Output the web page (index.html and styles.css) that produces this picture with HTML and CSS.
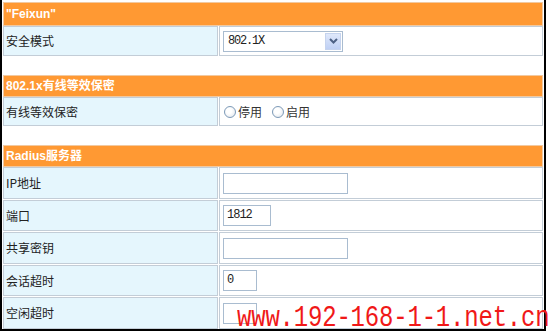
FILE: index.html
```html
<!DOCTYPE html>
<html>
<head>
<meta charset="utf-8">
<link rel="stylesheet" href="styles.css">
</head>
<body>
<div class="frame">
  <div class="section">
    <div class="head first">"Feixun"</div>
    <div class="row r30">
      <div class="label">安全模式</div>
      <div class="value">
        <div class="select">
          <span class="sel-text">802.1X</span>
          <span class="sel-btn"><svg width="9" height="6" viewBox="0 0 9 6"><path d="M1 1 L4.5 4.5 L8 1" fill="none" stroke="#4d6185" stroke-width="2"/></svg></span>
        </div>
      </div>
    </div>
  </div>
  <div class="section">
    <div class="head">802.1x有线等效保密</div>
    <div class="row r29">
      <div class="label">有线等效保密</div>
      <div class="value">
        <label class="radio"><span class="dot"></span>停用</label>
        <label class="radio"><span class="dot"></span>启用</label>
      </div>
    </div>
  </div>
  <div class="section">
    <div class="head">Radius服务器</div>
    <div class="row r32">
      <div class="label">IP地址</div>
      <div class="value"><span class="input wide"></span></div>
    </div>
    <div class="row">
      <div class="label">端口</div>
      <div class="value"><span class="input mid">1812</span></div>
    </div>
    <div class="row r32">
      <div class="label">共享密钥</div>
      <div class="value"><span class="input wide"></span></div>
    </div>
    <div class="row">
      <div class="label">会话超时</div>
      <div class="value"><span class="input short">0</span></div>
    </div>
    <div class="row r32">
      <div class="label">空闲超时</div>
      <div class="value"><span class="input short"></span></div>
    </div>
  </div>
  <div class="watermark">www.192-168-1-1.net.cn</div>
</div>
</body>
</html>
```
FILE: styles.css
```css
html, body {
  margin: 0;
  padding: 0;
  background: #fff;
}
body {
  font-family: "Noto Sans CJK SC", "Liberation Sans", sans-serif;
  font-size: 12px;
  color: #222;
}
.frame {
  position: relative;
  width: 540px;
  height: 327px;
  padding: 2px 1px 0 1px;
  border-left: 2px solid #000;
  border-right: 2px solid #000;
  border-bottom: 2px solid #000;
  display: flex;
  flex-direction: column;
  gap: 19px;
}
.section {
  display: flex;
  flex-direction: column;
  gap: 1px;
}
.head {
  box-sizing: border-box;
  height: 22px;
  line-height: 20px;
  background: #ff9933;
  border: 1px solid #f2c9a0;
  color: #fff;
  font-family: "Liberation Sans", "Noto Sans CJK SC", sans-serif;
  font-weight: bold;
  font-size: 12px;
  padding-left: 2px;
  margin-bottom: -1px;
}
.head.first {
  height: 24px;
  line-height: 22px;
}
.row {
  display: grid;
  grid-template-columns: 215px 1fr;
  gap: 1px;
  height: 31px;
  box-sizing: border-box;
}
.row.r30 { height: 30px; }
.row.r29 { height: 29px; }
.row.r32 { height: 32px; }
.label, .value {
  border: 1px solid #c3cdd7;
  display: flex;
  align-items: center;
}
.label {
  background: #e5f6fd;
  padding-left: 2px;
  padding-bottom: 1px;
}
.value {
  background: #fff;
  padding-left: 3px;
}
.select {
  width: 118px;
  height: 19px;
  border: 1px solid #a9bcd0;
  display: flex;
  align-items: center;
  justify-content: space-between;
  background: #fff;
}
.sel-text {
  font-family: "Liberation Mono", monospace;
  font-size: 12px;
  letter-spacing: -1.2px;
  padding-left: 4px;
  color: #222;
}
.sel-btn {
  width: 16px;
  height: 17px;
  margin-right: 1px;
  background: linear-gradient(#dfe8fb, #bfd0f4);
  border: 1px solid #c5d3ee;
  box-sizing: border-box;
  display: flex;
  align-items: center;
  justify-content: center;
}
.radio {
  display: inline-flex;
  align-items: center;
  margin-right: 9px;
  padding-left: 1px;
  color: #333;
}
.dot {
  width: 10px;
  height: 10px;
  border-radius: 50%;
  border: 1px solid #7d9ab8;
  background: radial-gradient(circle at 40% 40%, #fff 30%, #dde3ea 100%);
  margin-right: 2px;
}
.input {
  display: inline-block;
  box-sizing: border-box;
  height: 21px;
  border: 1px solid #a9bcd0;
  font-family: "Liberation Mono", monospace;
  font-size: 12px;
  letter-spacing: -1px;
  line-height: 19px;
  padding-left: 3px;
  color: #222;
}
.input.wide { width: 125px; }
.input.mid { width: 48px; }
.input.short { width: 34px; }
.watermark {
  position: absolute;
  left: 235px;
  top: 310px;
  font-family: "Liberation Mono", monospace;
  font-size: 24px;
  line-height: 19px;
  letter-spacing: -0.2px;
  color: #f01818;
  white-space: nowrap;
  transform: scaleY(1.2);
  transform-origin: 0 16px;
}
```
